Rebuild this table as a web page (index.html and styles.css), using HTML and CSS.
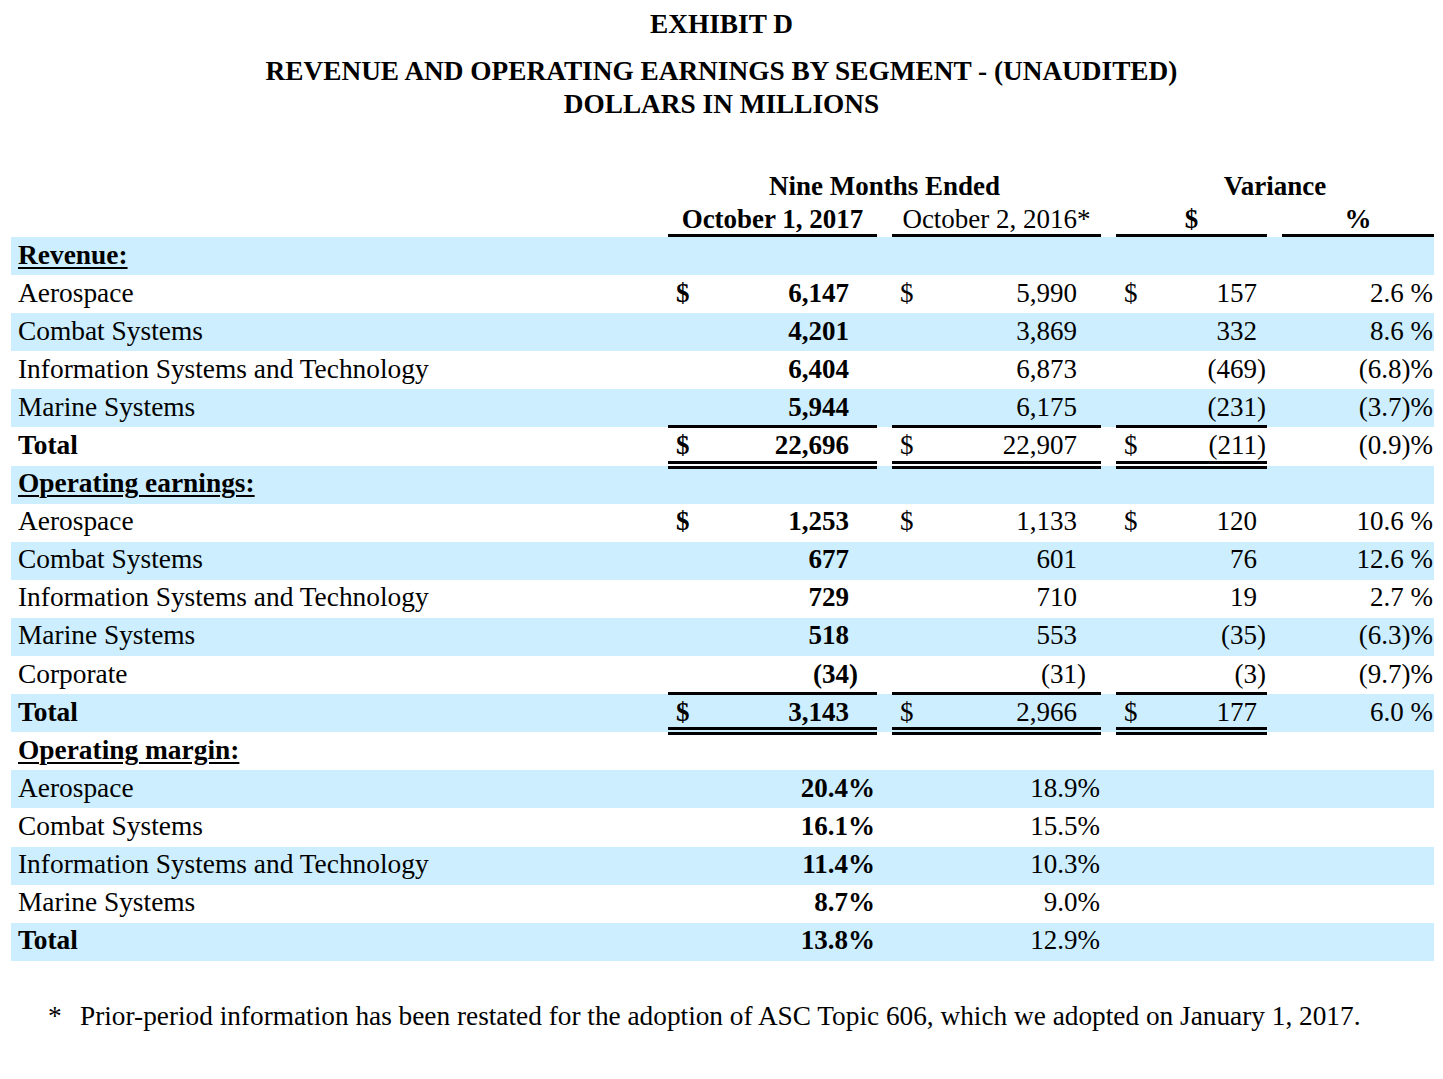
FILE: index.html
```html
<!DOCTYPE html>
<html>
<head>
<meta charset="utf-8">
<title>Exhibit D</title>
<link rel="stylesheet" href="styles.css">
</head>
<body>
<div class="title">
  <div class="exhibit">EXHIBIT D</div>
  <div>REVENUE AND OPERATING EARNINGS BY SEGMENT - (UNAUDITED)</div>
  <div>DOLLARS IN MILLIONS</div>
</div>
<table class="fin">
  <colgroup>
    <col class="c-label"><col class="c-a"><col class="c-g"><col class="c-b"><col class="c-g"><col class="c-c"><col class="c-g"><col class="c-d">
  </colgroup>
  <thead>
    <tr class="h1"><td></td><th colspan="3">Nine Months Ended</th><td></td><th colspan="3">Variance</th></tr>
    <tr class="h2"><td></td><th class="u">October 1, 2017</th><td></td><th class="u reg">October 2, 2016*</th><td></td><th class="u">$</th><td></td><th class="u">%</th></tr>
  </thead>
  <tbody>
    <tr class="bl"><td class="lab"><span class="sec">Revenue:</span></td><td></td><td></td><td></td><td></td><td></td><td></td><td></td></tr>
    <tr><td class="lab">Aerospace</td><td class="a"><span class="cur">$</span>6,147</td><td></td><td class="b"><span class="cur">$</span>5,990</td><td></td><td class="c"><span class="cur">$</span>157</td><td></td><td class="d">2.6&nbsp;%</td></tr>
    <tr class="bl"><td class="lab">Combat Systems</td><td class="a">4,201</td><td></td><td class="b">3,869</td><td></td><td class="c">332</td><td></td><td class="d">8.6&nbsp;%</td></tr>
    <tr><td class="lab">Information Systems and Technology</td><td class="a">6,404</td><td></td><td class="b">6,873</td><td></td><td class="c">(469<span class="cp">)</span></td><td></td><td class="d">(6.8)%</td></tr>
    <tr class="bl"><td class="lab">Marine Systems</td><td class="a">5,944</td><td></td><td class="b">6,175</td><td></td><td class="c">(231<span class="cp">)</span></td><td></td><td class="d">(3.7)%</td></tr>
    <tr><td class="lab tot">Total</td><td class="a rule"><span class="cur">$</span>22,696</td><td></td><td class="b rule"><span class="cur">$</span>22,907</td><td></td><td class="c rule"><span class="cur">$</span>(211<span class="cp">)</span></td><td></td><td class="d">(0.9)%</td></tr>
    <tr class="bl"><td class="lab"><span class="sec">Operating earnings:</span></td><td></td><td></td><td></td><td></td><td></td><td></td><td></td></tr>
    <tr><td class="lab">Aerospace</td><td class="a"><span class="cur">$</span>1,253</td><td></td><td class="b"><span class="cur">$</span>1,133</td><td></td><td class="c"><span class="cur">$</span>120</td><td></td><td class="d">10.6&nbsp;%</td></tr>
    <tr class="bl"><td class="lab">Combat Systems</td><td class="a">677</td><td></td><td class="b">601</td><td></td><td class="c">76</td><td></td><td class="d">12.6&nbsp;%</td></tr>
    <tr><td class="lab">Information Systems and Technology</td><td class="a">729</td><td></td><td class="b">710</td><td></td><td class="c">19</td><td></td><td class="d">2.7&nbsp;%</td></tr>
    <tr class="bl"><td class="lab">Marine Systems</td><td class="a">518</td><td></td><td class="b">553</td><td></td><td class="c">(35<span class="cp">)</span></td><td></td><td class="d">(6.3)%</td></tr>
    <tr><td class="lab">Corporate</td><td class="a">(34<span class="cp">)</span></td><td></td><td class="b">(31<span class="cp">)</span></td><td></td><td class="c">(3<span class="cp">)</span></td><td></td><td class="d">(9.7)%</td></tr>
    <tr class="bl"><td class="lab tot">Total</td><td class="a rule"><span class="cur">$</span>3,143</td><td></td><td class="b rule"><span class="cur">$</span>2,966</td><td></td><td class="c rule"><span class="cur">$</span>177</td><td></td><td class="d">6.0&nbsp;%</td></tr>
    <tr><td class="lab"><span class="sec">Operating margin:</span></td><td></td><td></td><td></td><td></td><td></td><td></td><td></td></tr>
    <tr class="bl"><td class="lab">Aerospace</td><td class="a m">20.4%</td><td></td><td class="b m">18.9%</td><td></td><td></td><td></td><td></td></tr>
    <tr><td class="lab">Combat Systems</td><td class="a m">16.1%</td><td></td><td class="b m">15.5%</td><td></td><td></td><td></td><td></td></tr>
    <tr class="bl"><td class="lab">Information Systems and Technology</td><td class="a m">11.4%</td><td></td><td class="b m">10.3%</td><td></td><td></td><td></td><td></td></tr>
    <tr><td class="lab">Marine Systems</td><td class="a m">8.7%</td><td></td><td class="b m">9.0%</td><td></td><td></td><td></td><td></td></tr>
    <tr class="bl"><td class="lab tot">Total</td><td class="a m">13.8%</td><td></td><td class="b m">12.9%</td><td></td><td></td><td></td><td></td></tr>
  </tbody>
</table>
<p class="note"><span class="star">*</span>Prior-period information has been restated for the adoption of ASC Topic 606, which we adopted on January 1, 2017.</p>
</body>
</html>
```
FILE: styles.css
```css
html, body {
  margin: 0;
  padding: 0;
  background: #ffffff;
}
body {
  font-family: "Liberation Serif", "Times New Roman", serif;
  font-size: 27px;
  color: #000000;
}
.title {
  text-align: center;
  font-weight: bold;
  font-size: 27.3px;
  line-height: 33px;
  padding-top: 8px;
}
.exhibit {
  margin-bottom: 14px;
}
.fin {
  margin: 49px 0 0 11px;
  width: 1423px;
  table-layout: fixed;
  border-collapse: separate;
  border-spacing: 0;
  line-height: 33px;
}
.c-label { width: 657px; }
.c-a { width: 209px; }
.c-b { width: 209px; }
.c-g { width: 15px; }
.c-c { width: 151px; }
.c-d { width: 152px; }
td, th {
  padding: 0;
  white-space: nowrap;
}
thead th {
  font-weight: bold;
  text-align: center;
  vertical-align: top;
}
tr.h1 { height: 33px; }
tr.h2 { height: 34px; }
tr.h2 th, tr.h2 td {
  line-height: 29px;
  padding-top: 2px;
}
th.u { border-bottom: 3px solid #000; }
th.reg { font-weight: normal; }
tbody tr { height: 38.1px; }
tbody td {
  vertical-align: middle;
  padding-bottom: 2px;
}
tr.bl { background: #cceeff; }
.lab {
  padding-left: 7px;
  font-size: 27.4px;
}
.tot { font-weight: bold; }
.sec {
  font-weight: bold;
  text-decoration: underline;
  text-decoration-thickness: 2px;
  text-underline-offset: 3px;
}
.a, .b, .c, .d { text-align: right; }
.a { font-weight: bold; padding-right: 28px; }
.b { padding-right: 24px; }
.c { padding-right: 10px; }
.d { padding-right: 1px; }
.a.m { padding-right: 2px; }
.b.m { padding-right: 1px; }
.cur {
  float: left;
  padding-left: 8px;
}
.cp { margin-right: -0.333em; }
.rule { position: relative; }
.rule::before {
  content: "";
  position: absolute;
  left: 0;
  right: 0;
  top: -2px;
  height: 3px;
  background: #000;
}
.rule::after {
  content: "";
  position: absolute;
  left: 0;
  right: 0;
  bottom: -3px;
  height: 2px;
  border-top: 3px solid #000;
  border-bottom: 3px solid #000;
}
.note {
  margin: 39px 0 0 0;
  padding-left: 48px;
  font-size: 27.3px;
  line-height: 33px;
}
.star {
  display: inline-block;
  width: 32px;
}
```
